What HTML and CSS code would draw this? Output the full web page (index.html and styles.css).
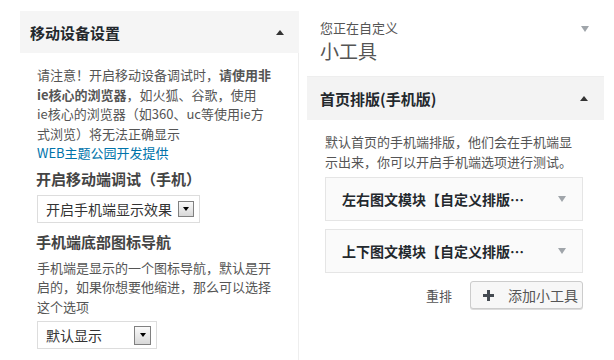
FILE: index.html
```html
<!DOCTYPE html>
<html lang="zh">
<head>
<meta charset="utf-8">
<link rel="stylesheet" href="styles.css">
</head>
<body>
<div class="page">
  <div class="left">
    <div class="panel-head">
      <span>移动设备设置</span>
      <span class="tri-up"></span>
    </div>
    <div class="panel-body">
      <div class="desc lines">
        <div>请注意！开启移动设备调试时，<b>请使用非</b></div>
        <div><b>ie核心的浏览器</b>，如火狐、谷歌，使用</div>
        <div>ie核心的浏览器（如360、uc等使用ie方</div>
        <div>式浏览）将无法正确显示</div>
        <div><a class="link" href="#">WEB主题公园开发提供</a></div>
      </div>
      <h3 class="label">开启移动端调试（手机）</h3>
      <div class="select sel1"><span>开启手机端显示效果</span><span class="drop"><i></i></span></div>
      <h3 class="label">手机端底部图标导航</h3>
      <p class="desc">手机端是显示的一个图标导航，默认是开启的，如果你想要他缩进，那么可以选择这个选项</p>
      <div class="select sel2"><span>默认显示</span><span class="drop"><i></i></span></div>
    </div>
  </div>
  <div class="right">
    <div class="crumb">
      <div>
        <div class="crumb-small">您正在自定义</div>
        <div class="crumb-title">小工具</div>
      </div>
      <span class="tri-down"></span>
    </div>
    <div class="sec-head">
      <span>首页排版(手机版)</span>
      <span class="tri-up"></span>
    </div>
    <div class="sec-body">
      <p class="sec-desc">默认首页的手机端排版，他们会在手机端显示出来，你可以开启手机端选项进行测试。</p>
      <div class="widget"><span>左右图文模块【自定义排版…</span><span class="tri-down"></span></div>
      <div class="widget"><span>上下图文模块【自定义排版…</span><span class="tri-down"></span></div>
      <div class="actions">
        <span class="reorder">重排</span>
        <span class="add-btn">
          <svg width="13" height="13" viewBox="0 0 13 13"><path d="M6.5 1v11M1 6.5h11" stroke="#454b52" stroke-width="3"/></svg>
          <span>添加小工具</span>
        </span>
      </div>
    </div>
  </div>
</div>
</body>
</html>
```
FILE: styles.css
```css
* { box-sizing: border-box; }
html, body { margin: 0; padding: 0; background: #fff; }
body {
  font-family: "Noto Sans CJK SC", "DejaVu Sans", sans-serif;
  color: #555;
  width: 614px;
  height: 360px;
  overflow: hidden;
}
.page { display: flex; height: 360px; }

.left { width: 299px; padding: 11px 0 0 20px; display: flex; flex-direction: column; }
.panel-head {
  height: 42px;
  background: #f5f5f5;
  display: flex;
  align-items: center;
  justify-content: space-between;
  padding: 0 15px 0 10px;
  font-size: 15px;
  font-weight: bold;
  color: #23282d;
}
.panel-body {
  flex: 1;
  border-right: 1px solid #eee;
  padding: 12px 0 0 17px;
}
.desc {
  margin: 0;
  font-size: 13px;
  line-height: 19.5px;
  width: 245px;
  color: #555;
}
.lines div { white-space: nowrap; height: 19.5px; }
.desc b { color: #555; }
.link { color: #0073aa; text-decoration: none; }
.label {
  margin: 6px 0 6px -1px;
  font-size: 15px;
  line-height: 20px;
  font-weight: bold;
  color: #444;
}
.select {
  display: flex;
  align-items: center;
  justify-content: space-between;
  height: 28px;
  border: 1px solid #ddd;
  padding: 0 5px 0 8px;
  font-size: 14px;
  color: #333;
  background: #fff;
}
.sel1 { width: 163px; }
.sel2 { width: 120px; margin-top: 5px; }
.sel1 + .label { margin-top: 9px; }
.drop {
  width: 16px;
  height: 16px;
  border: 1px solid #808080;
  background: linear-gradient(#fafafa, #d8d8d8);
  display: flex;
  align-items: center;
  justify-content: center;
}
.drop i {
  width: 0; height: 0;
  border-left: 3.5px solid transparent;
  border-right: 3.5px solid transparent;
  border-top: 4px solid #000;
}
.sel2 .drop { width: 17px; height: 19px; }

.tri-up {
  width: 0; height: 0;
  border-left: 4px solid transparent;
  border-right: 4px solid transparent;
  border-bottom: 5px solid #333;
}
.tri-down {
  width: 0; height: 0;
  border-left: 4.5px solid transparent;
  border-right: 4.5px solid transparent;
  border-top: 6px solid #a0a5aa;
}

.right { width: 315px; padding: 0 10px 0 8px; }
.crumb {
  height: 76px;
  display: flex;
  justify-content: space-between;
  align-items: flex-start;
  padding: 19px 15px 0 13px;
}
.crumb .tri-down { margin-top: 7px; }
.crumb-small { font-size: 13px; line-height: 18px; color: #555; }
.crumb-title { font-size: 19px; line-height: 24px; margin-top: 2px; color: #555; }
.sec-head {
  height: 44px;
  background: #f3f3f3;
  border-top: 1px solid #eee;
  display: flex;
  align-items: center;
  justify-content: space-between;
  padding: 0 16px 0 13px;
  font-size: 15px;
  font-weight: bold;
  color: #23282d;
}
.sec-body { padding: 12px 21px 0 18px; }
.sec-desc {
  margin: 0 0 5px 0;
  font-size: 13px;
  line-height: 20px;
  color: #555;
  padding-right: 4px;
}
.widget {
  height: 44px;
  border: 1px solid #e5e5e5;
  background: #fafafa;
  display: flex;
  align-items: center;
  justify-content: space-between;
  padding: 0 16px 0 16px;
  font-size: 14px;
  font-weight: bold;
  color: #23282d;
  margin-bottom: 8px;
}
.actions {
  display: flex;
  justify-content: flex-end;
  align-items: center;
  gap: 18px;
  margin-top: 1px;
}
.reorder { font-size: 13px; color: #555; }
.add-btn {
  height: 28px;
  width: 113px;
  border: 1px solid #ccc;
  border-radius: 3px;
  background: #f7f7f7;
  box-shadow: 0 1px 0 #ddd;
  display: flex;
  align-items: center;
  gap: 13px;
  padding: 0 0 0 11px;
  font-size: 14px;
  color: #555;
}
.add-btn svg { display: block; }
```
